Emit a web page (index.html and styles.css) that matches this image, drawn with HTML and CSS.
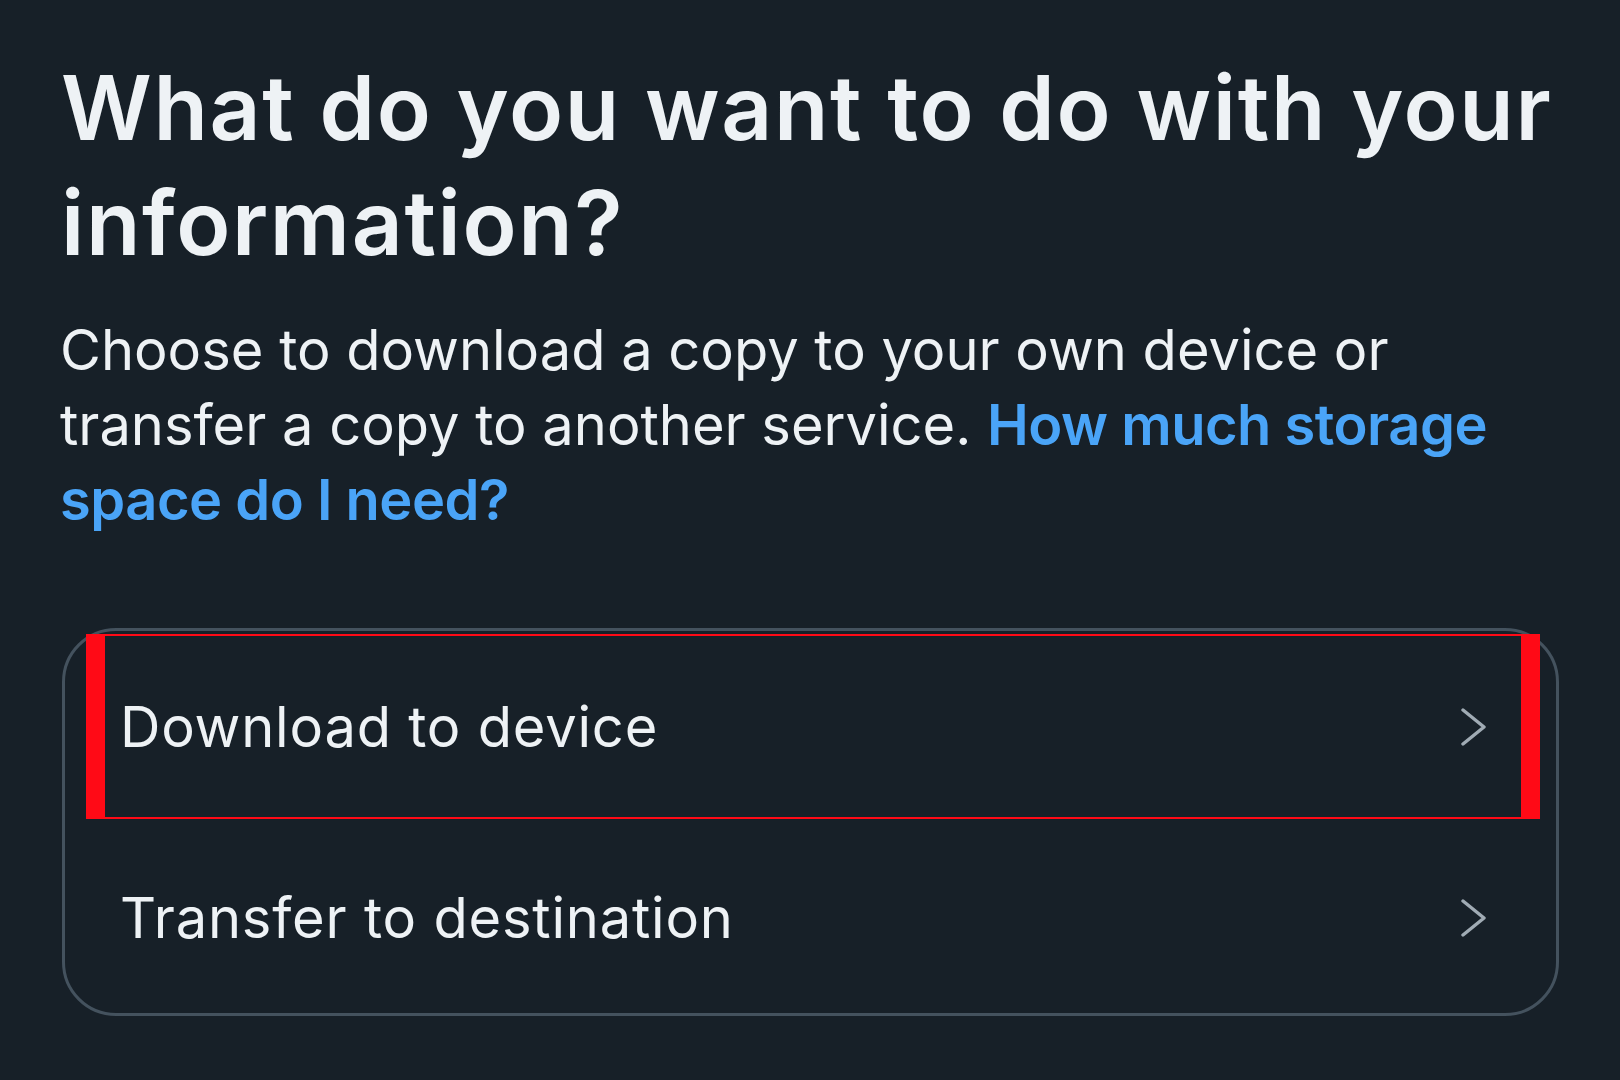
FILE: index.html
```html
<!DOCTYPE html>
<html lang="en">
<head>
<meta charset="utf-8">
<title>What do you want to do with your information?</title>
<link rel="stylesheet" href="styles.css">
</head>
<body>
<main class="page">
  <h1 class="title">What do you want to do with your information?</h1>
  <p class="intro">Choose to download a copy to your own device or transfer a copy to another service. <a class="link" href="#">How much storage space do I need?</a></p>
  <div class="card">
    <div class="row">
      <span class="row-label">Download to device</span>
      <svg class="chev" viewBox="0 0 26 40" width="26" height="40"><polyline points="3,3 24,20 3,37" fill="none" stroke="currentColor" stroke-width="3.4" stroke-linecap="round" stroke-linejoin="round"/></svg>
    </div>
    <div class="row">
      <span class="row-label">Transfer to destination</span>
      <svg class="chev" viewBox="0 0 26 40" width="26" height="40"><polyline points="3,3 24,20 3,37" fill="none" stroke="currentColor" stroke-width="3.4" stroke-linecap="round" stroke-linejoin="round"/></svg>
    </div>
    <div class="highlight"></div>
  </div>
</main>
</body>
</html>
```

FILE: styles.css
```css
html, body {
  margin: 0;
  padding: 0;
  background: #172028;
}
body {
  width: 1620px;
  height: 1080px;
  overflow: hidden;
  font-family: Inter, "Noto Sans", sans-serif;
  color: #eef2f5;
}
.page {
  padding: 50px 40px 0 60px;
}
.title {
  margin: 0;
  font-size: 89px;
  line-height: 115px;
  font-weight: 600;
  padding-left: 1px;
  letter-spacing: 1.65px;
}
.intro {
  margin: 33px 0 0 0;
  font-size: 56px;
  line-height: 75px;
  font-weight: 400;
  max-width: 1440px;
}
.link {
  color: #4aa4f7;
  font-weight: 600;
  letter-spacing: -0.5px;
  text-decoration: none;
}
.card {
  position: relative;
  margin-top: 90px;
  margin-left: 2px;
  border: 3px solid #44525e;
  border-radius: 54px;
  width: 1491px;
}
.row {
  display: flex;
  align-items: center;
  justify-content: space-between;
  height: 191px;
  padding: 0 70px 0 55px;
}
.row-label {
  font-size: 56px;
  font-weight: 400;
  letter-spacing: 0.8px;
}
.chev {
  color: #a0abb4;
  display: block;
}
.highlight {
  position: absolute;
  left: 21px;
  top: 3px;
  width: 1416px;
  height: 181px;
  border-style: solid;
  border-color: #ff0a16;
  border-width: 2px 19px;
  pointer-events: none;
}
```
